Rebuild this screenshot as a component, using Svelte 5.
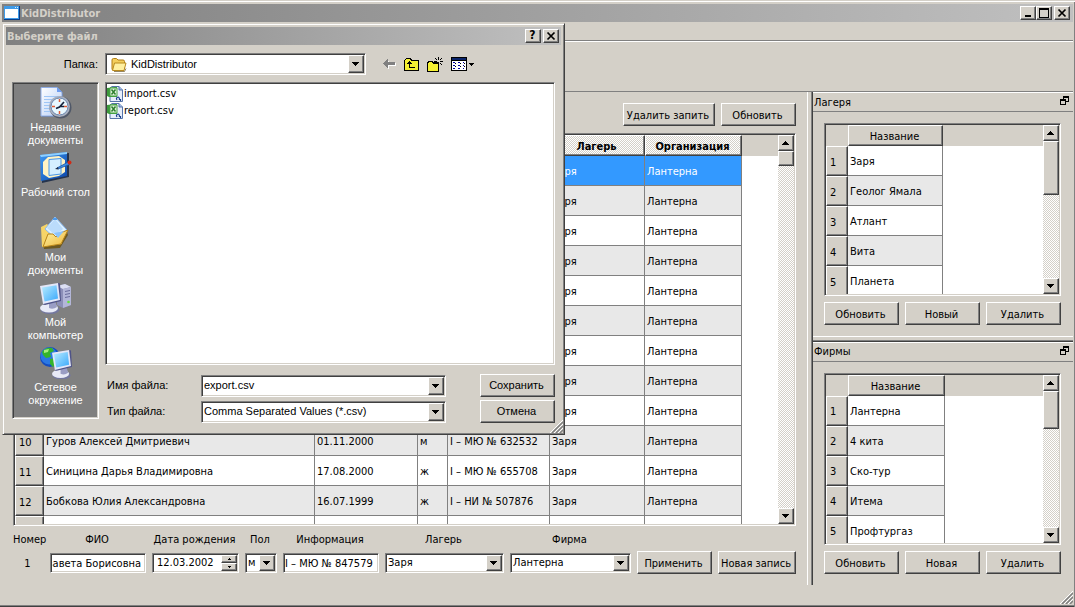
<script lang="ts">
	interface Column {
		title: string;
		width: number;
		active?: boolean;
	}

	interface Dock {
		title: string;
		column: Column;
		rows: string[][];
		thumb: number;
		actions: string[];
	}

	const CAMP = 'Заря';
	const FIRM = 'Лантерна';

	const kidColumns: Column[] = [
		{ title: '', width: 271 },
		{ title: '', width: 103 },
		{ title: '', width: 30 },
		{ title: '', width: 102 },
		{ title: 'Лагерь', width: 95, active: true },
		{ title: 'Организация', width: 97, active: true }
	];

	// rows 1-9 are covered by the file dialog
	const kidRows: string[][] = [
		...Array.from({ length: 9 }, () => ['', '', '', '', CAMP, FIRM]),
		['Гуров Алексей Дмитриевич', '01.11.2000', 'м', 'I – МЮ № 632532', CAMP, FIRM],
		['Синицина Дарья Владимировна', '17.08.2000', 'ж', 'I – МЮ № 655708', CAMP, FIRM],
		['Бобкова Юлия Александровна', '16.07.1999', 'ж', 'I – НИ № 507876', CAMP, FIRM],
		['', '', '', '', '', '']
	];

	const docks: Dock[] = [
		{
			title: 'Лагеря',
			column: { title: 'Название', width: 95 },
			rows: [['Заря'], ['Геолог Ямала'], ['Атлант'], ['Вита'], ['Планета']],
			thumb: 54,
			actions: ['Обновить', 'Новый', 'Удалить']
		},
		{
			title: 'Фирмы',
			column: { title: 'Название', width: 97 },
			rows: [['Лантерна'], ['4 кита'], ['Ско-тур'], ['Итема'], ['Профтургаз']],
			thumb: 38,
			actions: ['Обновить', 'Новая', 'Удалить']
		}
	];

	const places = [
		{ icon: 'recent', label: 'Недавние документы' },
		{ icon: 'desktop', label: 'Рабочий стол' },
		{ icon: 'documents', label: 'Мои документы' },
		{ icon: 'computer', label: 'Мой компьютер' },
		{ icon: 'network', label: 'Сетевое окружение' }
	];

	const files = ['import.csv', 'report.csv'];

	let dialogOpen = $state(true);
	let selected = $state(0);
	let fio = $state('завета Борисовна');
	let birthday = $state('12.03.2002');
	let info = $state('I – МЮ № 847579');
	let fileName = $state('export.csv');
</script>

{#snippet arrow(dir: 'up' | 'down')}
	<svg class="arrow" width="7" height="4" viewBox="0 0 7 4" shape-rendering="crispEdges">
		{#if dir === 'up'}
			<path d="M3 0h1v1h1v1h1v1h1v1H0V3h1V2h1V1h1z" />
		{:else}
			<path d="M0 0h7v1H6v1H5v1H4v1H3V3H2V2H1V1H0z" />
		{/if}
	</svg>
{/snippet}

{#snippet combo(id: string, value: string, icon: boolean = false)}
	<span class="combo sunken" class:with-icon={icon}>
		{#if icon}
			<svg class="combo-icon" width="17" height="15" viewBox="0 0 17 15">
				<path d="M2 12.500V3q0-1.500 1.500-1.500h3L8 3h5q1.500 0 1.500 1.500V12z" fill="#f4cf5c" stroke="#b07d14" />
				<path d="M2.500 13.500 4.500 6H16l-2 7.500z" fill="#fff0a0" stroke="#b98a1e" />
				<path d="M4 14.500h10.500l1.500-3" fill="none" stroke="#6a5420" opacity=".7" />
			</svg>
		{/if}
		<select {id}><option>{value}</option></select>
		<span class="drop raised">{@render arrow('down')}</span>
	</span>
{/snippet}

{#snippet grid(columns: Column[], rows: string[][], head: number, thumb: number, current: number, pick: (i: number) => void)}
	<div class="frame sunken">
		<div class="viewport">
			<table>
				<colgroup>
					<col style="width: {head}px" />
					{#each columns as c}<col style="width: {c.width}px" />{/each}
					<col />
				</colgroup>
				<thead>
					<tr>
						<td class="corner"></td>
						{#each columns as c}
							<th class="raised" class:active={c.active}>{c.title}</th>
						{/each}
						<td class="corner"></td>
					</tr>
				</thead>
				<tbody>
					{#each rows as row, i}
						<tr class:current={i === current} onclick={() => pick(i)}>
							<th class="raised">{i < 9 && columns.length > 1 ? '' : i === 12 ? '' : i + 1}</th>
							{#each row as cell}<td>{cell}</td>{/each}
							<td class="filler"></td>
						</tr>
					{/each}
				</tbody>
			</table>
		</div>
		<div class="scrollbar">
			<button class="raised" aria-label="Вверх">{@render arrow('up')}</button>
			<div class="thumb raised" style="height: {thumb}px"></div>
			<button class="raised last" aria-label="Вниз">{@render arrow('down')}</button>
		</div>
	</div>
{/snippet}

{#snippet grip()}
	<svg class="grip" width="13" height="13" viewBox="0 0 13 13">
		<path d="M0 13 13 0M4 13l9-9M8 13l5-5" stroke="#fff" stroke-width="1" />
		<path d="M2 13 13 2M6 13l7-7M10 13l3-3" stroke="#808080" stroke-width="1.500" />
	</svg>
{/snippet}

{#snippet monitor()}
	<ellipse cx="10" cy="27.500" rx="9.500" ry="4.500" fill="#73779f" />
	<ellipse cx="9" cy="26" rx="9" ry="4.500" fill="#e8eaf6" />
	<path d="m9 19 6-1 2 7q-4 3-8 1z" fill="#9a9dc4" />
	<path d="m18 1 2 .5 1 17.500-16 4-2-.5z" fill="#4f5388" />
	<path d="M0 4 18 1l2 17-17 4z" fill="#e3e7f8" />
	<path d="m2 5.500 14.500-2.300L18 16.500 4.500 19.500z" fill="url(#screen)" />
{/snippet}

{#snippet placeIcon(name: string)}
	<svg width="32" height="32" viewBox="0 0 32 32">
		<defs>
			<linearGradient id="screen" x1="0" y1="0" x2="1" y2="1">
				<stop offset="0" stop-color="#b9ecff" />
				<stop offset="1" stop-color="#39a8fb" />
			</linearGradient>
			<linearGradient id="sheet" x1="0" y1="0" x2="1" y2="1">
				<stop offset="0" stop-color="#ffffff" />
				<stop offset="1" stop-color="#b5cdf6" />
			</linearGradient>
			<linearGradient id="blue" x1="0" y1="0" x2="1" y2="1">
				<stop offset="0" stop-color="#3f9bf4" />
				<stop offset="1" stop-color="#0a44a8" />
			</linearGradient>
			<linearGradient id="gold" x1="0" y1="0" x2="1" y2="1">
				<stop offset="0" stop-color="#fff3a6" />
				<stop offset="1" stop-color="#efb73a" />
			</linearGradient>
		</defs>
		{#if name === 'recent'}
			<path d="M2 1h16l5 5v24H2z" fill="#4d5f86" opacity=".6" />
			<path d="M1 .500h16l5 5v23.500H1z" fill="url(#sheet)" stroke="#8fade6" />
			<path d="M17 0v5h5z" fill="#6f9df0" />
			<path d="M4 9.500h14M4 12.500h10M4 15.500h8M4 18.500h7M4 21.500h7M4 24.500h8" stroke="#9fc6f6" />
			<circle cx="20.500" cy="20.500" r="11" fill="#505868" />
			<circle cx="19.500" cy="19.500" r="10.500" fill="#a8b0c0" />
			<circle cx="19.500" cy="19.500" r="8.500" fill="#e8f8ff" stroke="#6b86ae" />
			<path d="M19.500 12v3M19.500 24v3M12 19.500h3M24 19.500h3" stroke="#e05a34" stroke-width="1.500" />
			<path d="m24 15-4.500 5-3.500 1.500M19.500 19.500H24" stroke="#15233c" stroke-width="1.700" fill="none" />
		{:else if name === 'desktop'}
			<path d="m2 4 27-3v24L2 31z" fill="#26344d" />
			<path d="m0 3 27-3v24L1 29z" fill="url(#blue)" />
			<path d="m0 3 27-3v2L1 5z" fill="#8ed0ff" />
			<path d="m8 5 11-1 6 4v12l-6 4-10 2-6-4V10z" fill="#fff3c4" />
			<path d="m9 7.500 12-1v15.500L9 23.500z" fill="#d5efff" stroke="#4795e8" />
			<path d="m17 16 11-6 1.500 2.500L18 17z" fill="#3a8ee8" stroke="#1a4b96" stroke-width=".7" />
			<circle cx="29.500" cy="10.500" r="2" fill="#d02a16" />
			<path d="m15 17 3-2 .5 2.500z" fill="#1b2a45" />
		{:else if name === 'documents'}
			<path d="M2 11 8 8l4 3 15 4 1 3-8 13L4 32z" fill="#6d5820" />
			<path d="M1 10 7 7l3 3h12v17L2 30z" fill="#f7d467" />
			<path d="M15 0 27 13 16 22 5 12z" fill="#ddf1ff" stroke="#86b8f2" />
			<path d="m15 2 8 10-8 6-8-7z" fill="#9fcbf7" opacity=".55" />
			<path d="M13 1h4v2h-4z" fill="#4f9bea" />
			<path d="m3 30 5-13 5 0 3 3 4-4 8-3-7 14z" fill="url(#gold)" stroke="#b88418" />
			<path d="m14 16 10-2-6 7z" fill="#8cc3fa" />
		{:else if name === 'computer'}
			<path d="m17 4 8-2 6 3v18l-8 3-6-3z" fill="#8c8fb8" />
			<path d="m17 4 8-2 6 3-8 2z" fill="#dcdff2" />
			<path d="m23 7 8-2v18l-8 3z" fill="#b3b6d8" />
			<path d="m25 9.500 5-1M25 12.500l5-1M25 15.500l5-1" stroke="#696c9c" />
			<circle cx="28.500" cy="20" r="1.300" fill="#62e33a" />
			{@render monitor()}
		{:else}
			<circle cx="10" cy="10" r="10" fill="#134cc0" />
			<circle cx="9" cy="9" r="8.500" fill="#2a78e4" />
			<path d="M2 5q4-5 10-4l2 3-4 2 1 4-5 1-3-3zM10 12l5-1 3 4-5 5-3-3z" fill="#35b42c" />
			<path d="m4 3 5-1-1 3-4 1z" fill="#a8ee7c" />
			<g transform="translate(12 2) scale(.95)">{@render monitor()}</g>
		{/if}
	</svg>
{/snippet}

<div class="window">
	<header class="titlebar">
		<svg class="app-icon" width="16" height="14" viewBox="0 0 16 14" shape-rendering="crispEdges">
			<path d="M0 0h16v14H0z" fill="#0a3c86" />
			<path d="M0 0h15v13H0z" fill="#3f9be8" />
			<path d="M1 3h13v9H1z" fill="#fff" />
			<path d="M11 1h1v1h-1zM13 1h1v1h-1z" fill="#d7ecff" />
		</svg>
		<h1>KidDistributor</h1>
		<button class="raised caption" aria-label="Свернуть">
			<svg width="12" height="10" viewBox="0 0 12 10"><path d="M3 7h6v2H3z" /></svg>
		</button>
		<button class="raised caption" aria-label="Развернуть">
			<svg width="12" height="10" viewBox="0 0 12 10" shape-rendering="crispEdges">
				<path d="M1 0h10v10H1zM2 2v7h8V2z" fill-rule="evenodd" />
			</svg>
		</button>
		<button class="raised caption close" aria-label="Закрыть">
			<svg width="12" height="10" viewBox="0 0 12 10"><path d="m2.500 1.500 7 7m0-7-7 7" stroke="#000" stroke-width="1.700" /></svg>
		</button>
	</header>
	<div class="menubar"></div>
	<div class="toolbar"></div>

	<div class="body">
		<main>
			<div class="actions">
				<button class="raised push wide">Удалить запить</button>
				<button class="raised push">Обновить</button>
			</div>
			{@render grid(kidColumns, kidRows, 29, 15, selected, (i) => (selected = i))}
			<form onsubmit={(e) => e.preventDefault()}>
				<span>Номер</span>
				<label for="fio">ФИО</label>
				<label for="birthday">Дата рождения</label>
				<label for="sex">Пол</label>
				<label for="info">Информация</label>
				<label for="camp">Лагерь</label>
				<label for="firm">Фирма</label>
				<span></span>
				<span></span>

				<output>{selected + 1}</output>
				<input id="fio" class="sunken" bind:value={fio} />
				<span class="spin sunken">
					<input id="birthday" bind:value={birthday} />
					<span class="steps">
						<button type="button" class="raised" aria-label="Больше">
							<svg width="3" height="2" viewBox="0 0 3 2" shape-rendering="crispEdges"><path d="M1 0h1v1h1v1H0V1h1z" /></svg>
						</button>
						<button type="button" class="raised" aria-label="Меньше">
							<svg width="3" height="2" viewBox="0 0 3 2" shape-rendering="crispEdges"><path d="M0 0h3v1H2v1H1V1H0z" /></svg>
						</button>
					</span>
				</span>
				{@render combo('sex', 'м')}
				<input id="info" class="sunken" bind:value={info} />
				{@render combo('camp', CAMP)}
				{@render combo('firm', FIRM)}
				<button class="raised push">Применить</button>
				<button type="button" class="raised push">Новая запись</button>
			</form>
		</main>

		<div class="split-v"></div>

		<aside>
			{#each docks as dock, n}
				{#if n > 0}<div class="split-h"></div>{/if}
				<section>
					<h2>
						{dock.title}
						<button class="float" aria-label="Открепить">
							<svg width="9" height="9" viewBox="0 0 9 9" shape-rendering="crispEdges">
								<path d="M3 0h6v6H6V5h2V2H4v1H3zM0 3h6v6H0zM1 5v3h4V5z" fill-rule="evenodd" />
							</svg>
						</button>
					</h2>
					<div class="dock-body">
						{@render grid([dock.column], dock.rows, 22, dock.thumb, -1, () => {})}
						<div class="dock-actions">
							{#each dock.actions as a}<button class="raised push">{a}</button>{/each}
						</div>
					</div>
				</section>
			{/each}
		</aside>
	</div>
	<footer>{@render grip()}</footer>

	{#if dialogOpen}
		<div class="dialog" role="dialog" aria-labelledby="dialog-title">
			<div class="titlebar">
				<h1 id="dialog-title">Выберите файл</h1>
				<button class="raised caption help">?</button>
				<button class="raised caption close" aria-label="Закрыть" onclick={() => (dialogOpen = false)}>
					<svg width="12" height="10" viewBox="0 0 12 10"><path d="m2.500 1.500 7 7m0-7-7 7" stroke="#000" stroke-width="1.700" /></svg>
				</button>
			</div>
			<div class="dialog-body">
				<label class="folder-label" for="folder">Папка:</label>
				<div class="folder-row">
					{@render combo('folder', 'KidDistributor', true)}
					<button class="tool back" aria-label="Назад">
						<svg width="13" height="10" viewBox="0 0 13 10" shape-rendering="crispEdges">
							<path d="M6 1v3h7v3H6v3L1 6z" fill="#fff" />
							<path d="M0 4h1V3h1V2h1V1h1V0h1v3h7v3H5v3H4V8H3V7H2V6H1V5H0z" fill="#808080" />
						</svg>
					</button>
					<button class="tool" aria-label="Вверх на один уровень">
						<svg width="15" height="13" viewBox="0 0 15 13" shape-rendering="crispEdges">
							<path d="M0 2h1V1h1V0h5v1h1v1h7v11H0z" />
							<path d="M1 2h1V1h4v1h1v1h7v9H1z" fill="#f4f032" />
							<path d="M5 3h1v1h1v1h1v1H6v3h5v1H5V6H3V5h1V4h1z" />
						</svg>
					</button>
					<button class="tool" aria-label="Создание новой папки">
						<svg width="16" height="15" viewBox="0 0 16 15" shape-rendering="crispEdges">
							<path d="M0 5h1V4h5v1h6v10H0z" />
							<path d="M1 6h1V5h3v1h1v1h5v7H1z" fill="#f4f032" />
							<path d="M11 0h1v3h-1zM11 6h1v3h-1zM7 4h3v1H7zM13 4h3v1h-3zM8 1h1v1H8zM9 2h1v1H9zM14 1h1v1h-1zM13 2h1v1h-1zM9 6h1v1H9zM13 6h1v1h-1zM14 7h1v1h-1z" />
						</svg>
					</button>
					<button class="tool" aria-label="Меню Вид">
						<svg width="24" height="14" viewBox="0 0 24 14" shape-rendering="crispEdges">
							<path d="M0 0h16v14H0z" />
							<path d="M1 1h14v2H1z" fill="#0a246a" />
							<path d="M1 4h14v9H1z" fill="#fff" />
							<path d="M2 5h2v1H2zM7 5h2v1H7zM12 5h1v1h-1zM2 8h2v1H2zM7 8h2v1H7zM12 8h1v1h-1zM2 11h2v1H2zM7 11h2v1H7zM12 11h1v1h-1z" fill="#0000a0" />
							<path d="M4 6h1v1H4zM9 6h1v1H9zM13 6h1v1h-1zM4 9h1v1H4zM9 9h1v1H9zM13 9h1v1h-1z" />
							<path d="M18 6h5v1h-1v1h-1v1h-1V8h-1V7h-1z" />
						</svg>
					</button>
				</div>

				<nav class="sunken">
					{#each places as p}
						<button class="place">{@render placeIcon(p.icon)}<span>{p.label}</span></button>
					{/each}
				</nav>

				<div class="dialog-main">
					<ul class="sunken">
						{#each files as f}
							<li>
								<svg width="16" height="16" viewBox="0 0 16 16">
									<path d="M5 .500h7L15.500 4v11.500H3V2z" fill="#e6eefb" stroke="#5775a8" />
									<path d="M12 .500V4h3.500" fill="#9db8e4" stroke="#5775a8" />
									<path d="M0 2 8 1h2v10H2L0 10z" fill="#3d9a3c" />
									<path d="M3 2h7v8H3z" fill="#e2f3de" stroke="#4aa345" />
									<path d="m4.500 3.500 4 5m0-5-4 5" stroke="#2d7f2c" stroke-width="1.500" />
									<path d="M10 14q-1.500-2 1-3 1.500 0 1.500 3M13.500 13v2" stroke="#1c3f8c" stroke-width="1.200" fill="none" />
								</svg>
								{f}
							</li>
						{/each}
					</ul>
					<div class="fields">
						<label for="filename">Имя файла:</label>
						<span class="combo sunken">
							<input id="filename" bind:value={fileName} />
							<span class="drop raised">{@render arrow('down')}</span>
						</span>
						<button class="raised push">Сохранить</button>
						<label for="filetype">Тип файла:</label>
						{@render combo('filetype', 'Comma Separated Values (*.csv)')}
						<button class="raised push" onclick={() => (dialogOpen = false)}>Отмена</button>
					</div>
				</div>
			</div>
			{@render grip()}
		</div>
	{/if}
</div>

<style>
	:global(body) {
		margin: 0;
	}
	.window {
		--face: #d4d0c8;
		--shadow: #808080;
		--dark: #404040;
		--checker: repeating-conic-gradient(#fff 0 25%, #d4d0c8 0 50%) 0 0 / 2px 2px;
		position: relative;
		display: flex;
		flex-direction: column;
		box-sizing: border-box;
		height: 100vh;
		min-height: 480px;
		padding: 4px 2px 3px;
		overflow: hidden;
		background: var(--face);
		box-shadow:
			inset 0 1px var(--face),
			inset 0 2px #fff,
			inset -1px 0 var(--shadow),
			inset 0 -1px var(--dark),
			inset 0 -2px var(--shadow);
		color: #000;
		font: 11px/13px 'DejaVu Sans Condensed', 'DejaVu Sans', sans-serif;
	}
	button,
	input,
	select {
		box-sizing: border-box;
		margin: 0;
		padding: 0;
		border: 0;
		border-radius: 0;
		background: none;
		color: inherit;
		font: inherit;
		outline: none;
	}
	.raised {
		box-sizing: border-box;
		border: 1px solid;
		border-color: #fff var(--dark) var(--dark) #fff;
		background: var(--face);
		box-shadow: inset -1px -1px var(--shadow);
	}
	.sunken {
		box-sizing: border-box;
		border: 1px solid;
		border-color: var(--shadow) #fff #fff var(--shadow);
		background: #fff;
		box-shadow:
			inset 1px 1px var(--dark),
			inset -1px -1px var(--face);
		padding: 1px;
	}
	.push {
		min-width: 75px;
		height: 23px;
		padding: 2px 2px 0 0;
		white-space: nowrap;
	}
	.wide {
		width: 92px;
	}

	.titlebar {
		display: flex;
		flex: none;
		align-items: center;
		height: 18px;
		padding: 0 3px 0 2px;
		background: linear-gradient(to right, #808080, #c0c0c0);
	}
	.titlebar h1 {
		flex: 1;
		margin: 0;
		color: #d4d0c8;
		font-size: 11px;
		line-height: 13px;
	}
	.app-icon {
		margin-right: 1px;
	}
	.caption {
		display: flex;
		align-items: center;
		justify-content: center;
		width: 16px;
		height: 14px;
		padding: 0 1px 1px 0;
	}
	.caption.close {
		margin-left: 2px;
	}
	.help {
		font-size: 12px;
		font-weight: bold;
	}

	.menubar {
		flex: none;
		height: 18px;
		border-bottom: 1px solid var(--shadow);
	}
	.toolbar {
		flex: none;
		height: 49px;
		border-top: 1px solid #fff;
		border-bottom: 1px solid var(--shadow);
	}
	.body {
		display: grid;
		flex: 1;
		grid-template-columns: minmax(0, 1fr) 6px 260px;
		min-height: 0;
	}
	main {
		display: flex;
		flex-direction: column;
		gap: 7px;
		min-height: 0;
		padding: 11px;
	}
	.actions {
		display: flex;
		gap: 6px;
		justify-content: flex-end;
	}
	.split-v,
	.split-h {
		box-sizing: border-box;
		border: 0 solid #fff;
	}
	.split-v {
		border-left-width: 1px;
		box-shadow:
			inset -1px 0 var(--dark),
			inset -2px 0 var(--shadow);
	}
	.split-h {
		border-top-width: 1px;
		box-shadow:
			inset 0 -1px var(--dark),
			inset 0 -2px var(--shadow);
	}

	.frame {
		display: flex;
		flex: 1;
		min-height: 0;
	}
	.viewport {
		flex: 1;
		overflow: hidden;
	}
	table {
		width: 100%;
		table-layout: fixed;
		border-spacing: 0;
		white-space: nowrap;
	}
	th,
	td {
		box-sizing: border-box;
		overflow: hidden;
		font-weight: normal;
	}
	thead th,
	thead td {
		height: 21px;
		padding: 2px 2px 0 0;
	}
	thead .corner {
		background: var(--face);
	}
	th.active {
		background: var(--checker);
		font-weight: bold;
	}
	tbody th {
		height: 30px;
		padding: 2px 3px 0;
		text-align: left;
	}
	tbody td {
		padding: 2px 2px 0;
		border: 0 solid var(--shadow);
		border-width: 0 1px 1px 0;
	}
	tbody tr:nth-child(even) td {
		background: #e8e8e8;
	}
	tbody tr.current td {
		background: #3399ff;
		color: #fff;
	}
	tbody tr td.filler {
		border: 0;
		background: #fff;
	}

	.scrollbar {
		display: flex;
		flex: none;
		flex-direction: column;
		width: 16px;
		background: var(--checker);
	}
	.scrollbar button {
		display: flex;
		flex: none;
		align-items: center;
		justify-content: center;
		height: 16px;
		padding-right: 1px;
	}
	.scrollbar .last {
		margin-top: auto;
	}

	form {
		display: grid;
		flex: none;
		grid-template-columns: 31px 96fr 87px 32px 96fr 119fr 121fr auto 78px;
		gap: 5px 6px;
		align-items: center;
		text-align: center;
	}
	form > * {
		min-width: 0;
	}
	form label,
	form > span:not([class]) {
		padding-right: 2px;
		white-space: nowrap;
	}
	form output {
		padding: 2px 2px 0 0;
	}
	form input.sunken {
		width: 100%;
		height: 20px;
		padding: 1px 4px 0 1px;
	}
	/* keeps the end of a long name in view */
	#fio {
		direction: rtl;
	}
	.spin {
		display: flex;
		height: 20px;
	}
	.spin input {
		flex: 1;
		min-width: 0;
		padding-left: 3px;
	}
	.steps {
		display: flex;
		flex-direction: column;
		width: 16px;
	}
	.steps button {
		display: flex;
		flex: 1;
		align-items: center;
		justify-content: center;
		min-height: 0;
	}

	.combo {
		position: relative;
		display: flex;
		height: 22px;
	}
	form .combo {
		height: 20px;
	}
	.combo select,
	.combo input {
		flex: 1;
		width: 100%;
		min-width: 0;
		padding: 0 18px 0 1px;
		appearance: none;
	}
	.drop {
		position: absolute;
		top: 1px;
		right: 1px;
		bottom: 1px;
		display: flex;
		align-items: center;
		justify-content: center;
		width: 16px;
		padding-right: 1px;
		pointer-events: none;
	}
	.combo-icon {
		position: absolute;
		top: 3px;
		left: 4px;
		pointer-events: none;
	}
	.combo.with-icon select {
		padding-left: 24px;
	}

	aside {
		display: grid;
		grid-template-rows: minmax(0, 1fr) 6px minmax(0, 1fr);
		min-height: 0;
	}
	section {
		display: flex;
		flex-direction: column;
		min-height: 0;
	}
	h2 {
		display: flex;
		box-sizing: border-box;
		flex: none;
		align-items: center;
		justify-content: space-between;
		height: 20px;
		margin: 0;
		padding: 0 4px 0 1px;
		border-top: 1px solid #fff;
		border-bottom: 1px solid var(--shadow);
		font-size: 11px;
		font-weight: normal;
	}
	.float {
		display: flex;
		padding-bottom: 3px;
	}
	.dock-body {
		display: flex;
		flex: 1;
		flex-direction: column;
		gap: 6px;
		min-height: 0;
		padding: 11px 12px 11px 11px;
	}
	.dock-actions {
		display: flex;
		flex: none;
		gap: 6px;
	}
	.dock-actions button {
		flex: 1;
		min-width: 0;
	}
	footer {
		display: flex;
		flex: none;
		align-items: flex-end;
		justify-content: flex-end;
		height: 19px;
	}

	.dialog {
		position: absolute;
		top: 23px;
		left: 2px;
		box-sizing: border-box;
		width: 563px;
		padding: 3px;
		border: 1px solid;
		border-color: var(--face) var(--dark) var(--dark) var(--face);
		background: var(--face);
		box-shadow:
			inset 1px 1px #fff,
			inset -1px -1px var(--shadow);
		font-family: 'Liberation Sans', Arial, sans-serif;
	}
	.dialog h1,
	.dialog ul,
	.dialog .help {
		font-family: 'DejaVu Sans Condensed', 'DejaVu Sans', sans-serif;
	}
	.dialog .titlebar {
		padding: 0 2px 0 1px;
	}
	.dialog > .grip {
		position: absolute;
		right: 1px;
		bottom: 1px;
	}
	.dialog-body {
		display: grid;
		grid-template-columns: 87px minmax(0, 1fr);
		gap: 7px 6px;
		align-items: start;
		padding: 8px 6px;
	}
	.folder-label {
		align-self: center;
		padding-right: 1px;
		text-align: right;
	}
	.folder-row {
		display: flex;
		gap: 8px;
		align-items: center;
	}
	.folder-row .combo {
		width: 261px;
	}
	.tool {
		display: flex;
	}
	.tool.back {
		margin-left: 9px;
	}
	nav {
		display: flex;
		flex-direction: column;
	}
	nav.sunken {
		padding: 4px 1px 6px;
		background: #808080;
	}
	.place {
		display: flex;
		flex-direction: column;
		gap: 2px;
		align-items: center;
		height: 65px;
		color: #fff;
	}
	.place span {
		width: 72px;
	}
	ul {
		height: 283px;
		margin: 0 0 9px;
		list-style: none;
	}
	ul.sunken {
		padding-top: 2px;
	}
	li {
		display: flex;
		gap: 1px;
		align-items: center;
		height: 17px;
	}
	.fields {
		display: grid;
		grid-template-columns: 94px 245px 1fr;
		gap: 3px 0;
		align-items: center;
		padding-left: 2px;
	}
	.fields .push {
		margin-left: auto;
		padding-top: 0;
	}
</style>
